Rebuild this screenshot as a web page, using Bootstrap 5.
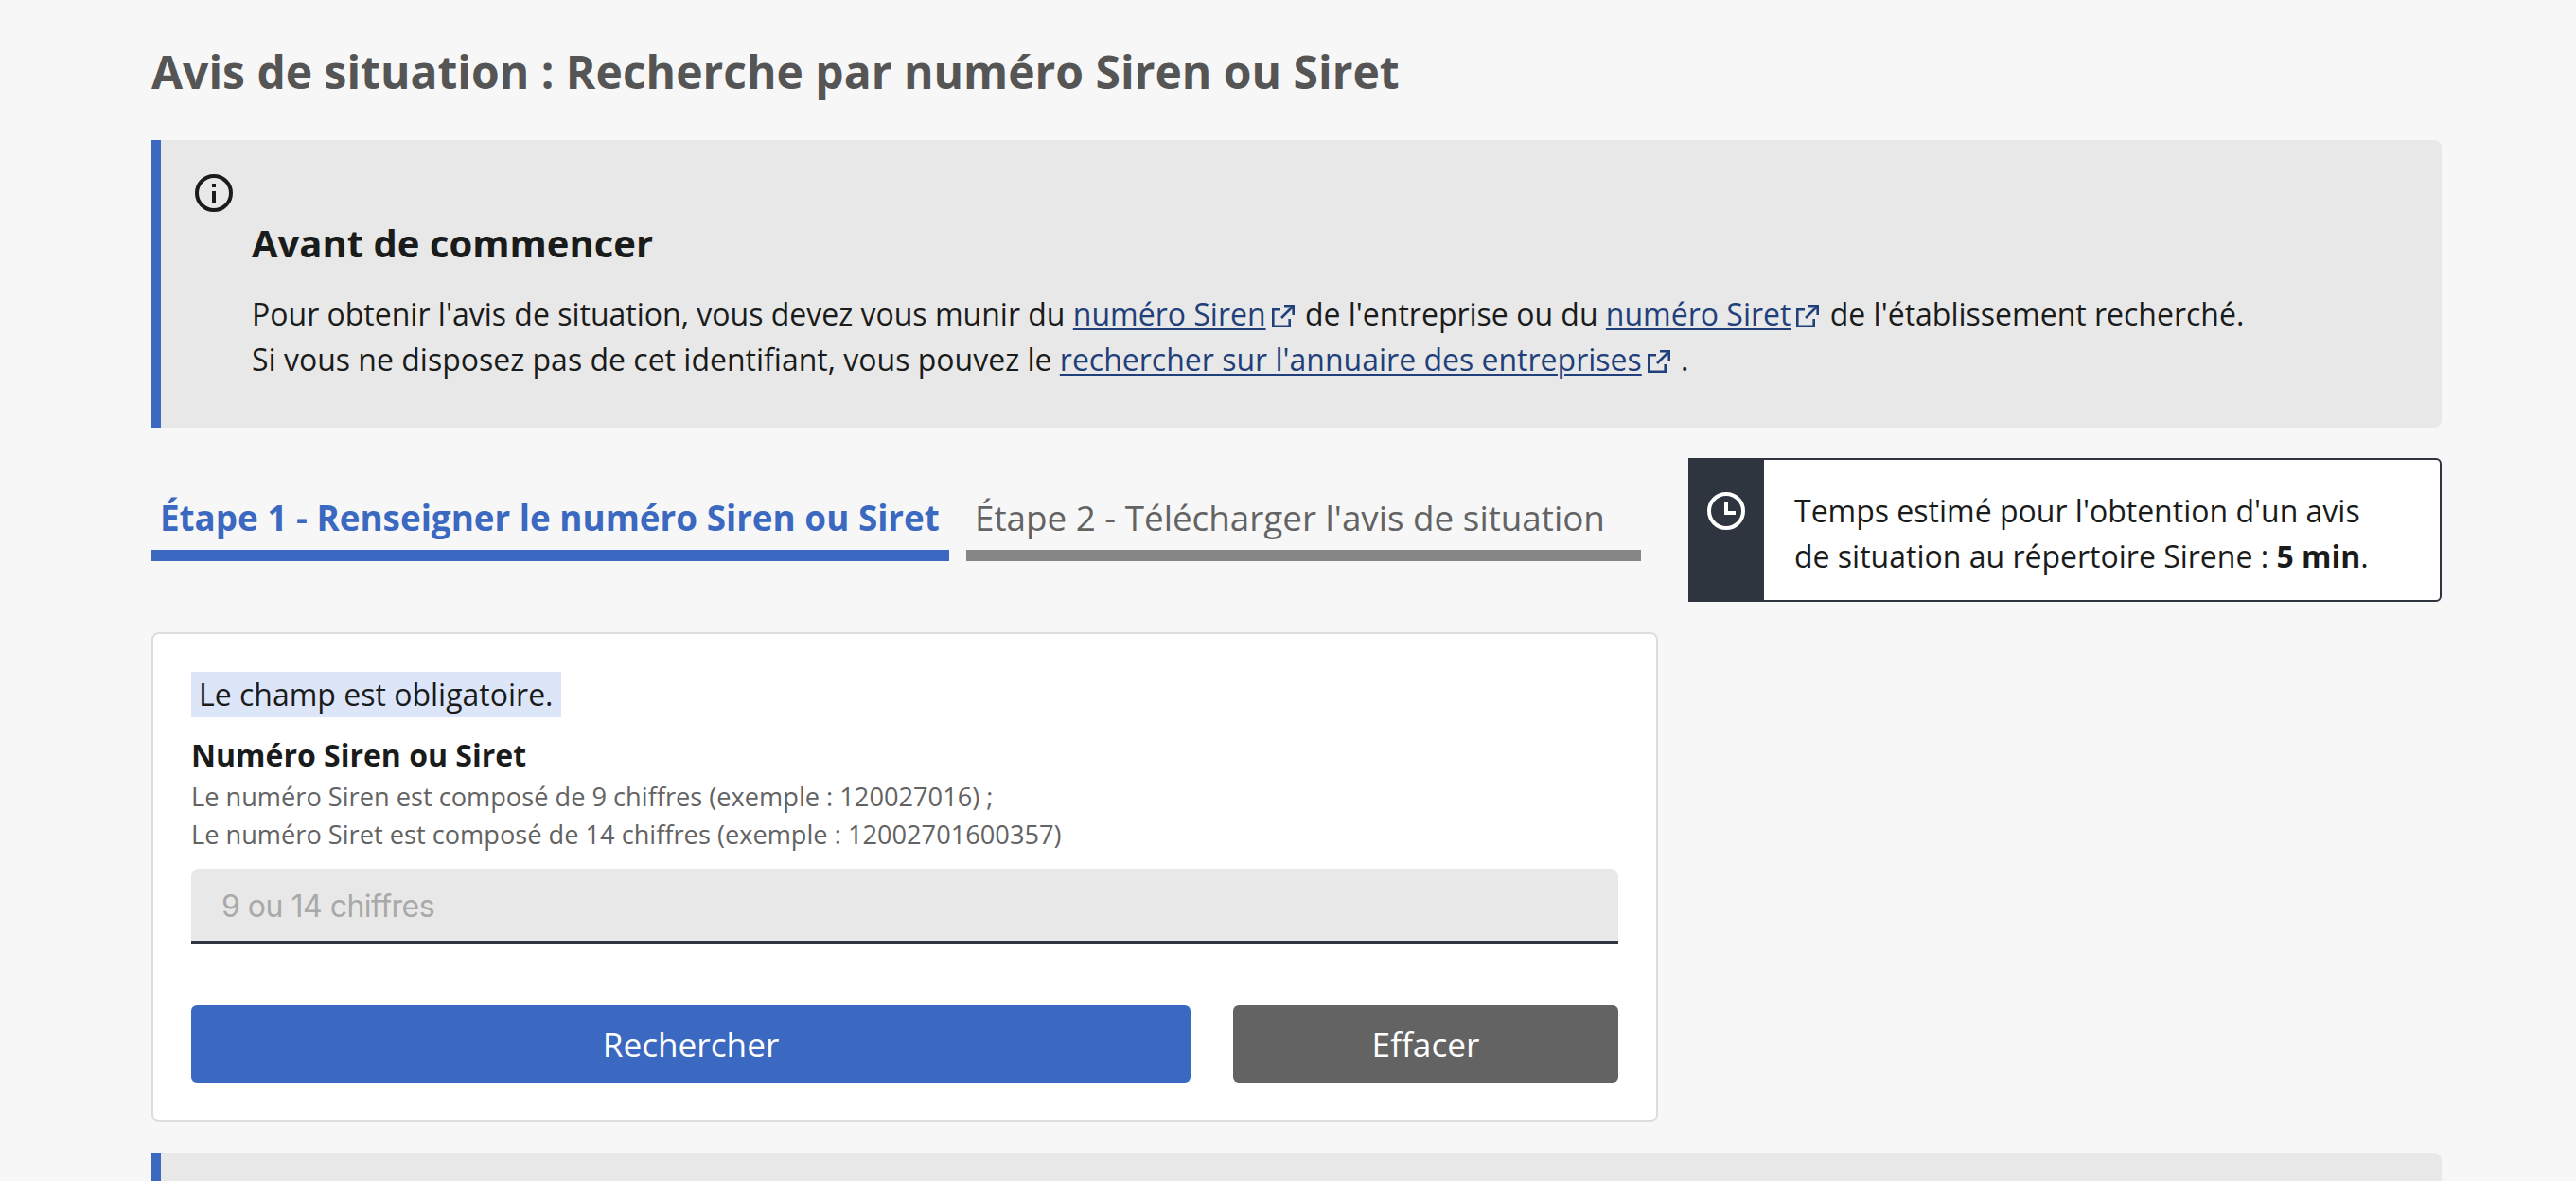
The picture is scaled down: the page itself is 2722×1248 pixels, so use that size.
<!DOCTYPE html>
<html lang="fr">
<head>
<meta charset="utf-8">
<meta name="viewport" content="width=device-width, initial-scale=1">
<title>Avis de situation</title>
<link rel="stylesheet" href="https://cdn.jsdelivr.net/npm/bootstrap@5.3.0/dist/css/bootstrap.min.css">
<style>
body{background:#f7f7f7;color:#1a1b1b;font-family:"Open Sans","Noto Sans",sans-serif;font-size:32px;line-height:48px;height:1248px;overflow:hidden}
.page-wrap{width:2420px;margin-left:160px;padding-top:44px}
.page-title{font-size:48px;line-height:64px;font-weight:700;color:#555;margin-bottom:40px}
.notice{background:#e8e8e8;border-left:10px solid #3b68c0;border-radius:0 8px 8px 0;padding:36px 32px 48px}
.notice-main{height:304px;gap:20px}
.notice-main h2{font-size:40px;line-height:56px;font-weight:700;margin:45px 0 23px}
.notice-next{height:80px;margin-top:32px}
.notice a{color:#1f407a;text-decoration-thickness:2px;text-underline-offset:3px}
.ext-icon{width:24px;height:24px;margin:0 3px 0 6px;vertical-align:-2px}
.step{font-size:36.8px;line-height:48px;padding:0 9px 10px;border-bottom:12px solid #868686;color:#636363;white-space:nowrap}
.step.active{font-weight:700;color:#3b68c0;border-color:#3b68c0}
.steps{gap:18px;margin-top:39px}
.step-one{width:843px}.step-two{width:713px}
.timing{width:796px;height:152px;background:#fff;border:2px solid #2f353e;border-radius:0 6px 6px 0}
.timing-icon{width:80px;margin:-2px 0 -2px -2px;background:#2f353e;padding-top:36px}
.timing-text{padding:30px 32px}
.search-box{width:1592px;height:518px;background:#fff;border:2px solid #ddd;border-radius:8px;padding:40px;margin-top:32px}
.required-note{background:#dde5f8;padding:0 8px;height:48px}
.field-label{line-height:48px;font-weight:700;margin-top:16px}
.field-hint{font-size:27.2px;line-height:40px;color:#636363}
.field-input,.field-input:focus{height:80px;border:0;border-bottom:4px solid #2f353e;border-radius:8px 8px 0 0;background:#e8e8e8;padding:2px 32px 0;font-family:Inter,sans-serif;font-size:32px;letter-spacing:-.5px;margin-top:16px}
.field-input::placeholder{color:#a9a9a9;opacity:1}
.actions{gap:45px;margin-top:64px}
.actions .btn{height:82px;font-size:35.2px;line-height:48px;border:0;border-radius:6px;color:#fff;padding:0}
.btn-find{width:1056px;background:#3b68c0}.btn-clear{width:407px;background:#636363}
</style>
<script src="https://cdn.jsdelivr.net/npm/bootstrap@5.3.0/dist/js/bootstrap.bundle.min.js"></script>
</head>
<body>
<svg class="d-none" aria-hidden="true"><symbol id="external" viewBox="0 0 24 24"><path d="M9 5.300H1.300V22.700H18.700V15M13 1.300h9.700V11M22.700 1.300L10 14" fill="none" stroke="currentColor" stroke-width="2.600"/></symbol></svg>
<main class="page-wrap">
<h1 class="page-title">Avis de situation : Recherche par numéro Siren ou Siret</h1>
<section class="notice notice-main d-flex align-items-start">
<svg class="flex-shrink-0" width="44" height="40" viewBox="0 0 44 40"><circle cx="24" cy="20" r="18" fill="none" stroke="currentColor" stroke-width="4"/><path d="M22 10h4v4h-4zM22 18h4v12h-4z" fill="currentColor"/></svg>
<div>
<h2>Avant de commencer</h2>
<p class="mb-0">Pour obtenir l'avis de situation, vous devez vous munir du <a href="#">numéro Siren</a><a href="#" aria-label="Siren"><svg class="ext-icon"><use href="#external"/></svg></a> de l'entreprise ou du <a href="#">numéro Siret</a><a href="#" aria-label="Siret"><svg class="ext-icon"><use href="#external"/></svg></a> de l'établissement recherché.<br>Si vous ne disposez pas de cet identifiant, vous pouvez le <a href="#">rechercher sur l'annuaire des entreprises</a><a href="#" aria-label="Annuaire"><svg class="ext-icon"><use href="#external"/></svg></a> .</p>
</div>
</section>
<div class="d-flex justify-content-between align-items-start mt-4 pt-2">
<div class="steps d-flex">
<div class="step step-one active">Étape 1 - Renseigner le numéro Siren ou Siret</div>
<div class="step step-two">Étape 2 - Télécharger l'avis de situation</div>
</div>
<aside class="timing d-flex">
<div class="timing-icon text-center flex-shrink-0"><svg class="d-block mx-auto" width="40" height="40" viewBox="0 0 40 40"><circle cx="20" cy="20" r="18" fill="none" stroke="#fff" stroke-width="4"/><path d="M20 10v12h10" fill="none" stroke="#fff" stroke-width="4"/></svg></div>
<div class="timing-text text-nowrap">Temps estimé pour l'obtention d'un avis<br>de situation au répertoire Sirene : <strong>5 min</strong>.</div>
</aside>
</div>
<form class="search-box">
<div class="d-flex"><span class="required-note">Le champ est obligatoire.</span></div>
<label class="field-label d-block" for="num">Numéro Siren ou Siret</label>
<div class="field-hint">Le numéro Siren est composé de 9 chiffres (exemple : 120027016) ;<br>Le numéro Siret est composé de 14 chiffres (exemple : 12002701600357)</div>
<input class="form-control field-input" id="num" type="text" placeholder="9 ou 14 chiffres">
<div class="actions d-flex">
<button class="btn btn-find" type="button">Rechercher</button>
<button class="btn btn-clear" type="button">Effacer</button>
</div>
</form>
<section class="notice notice-next"></section>
</main>
</body>
</html>
